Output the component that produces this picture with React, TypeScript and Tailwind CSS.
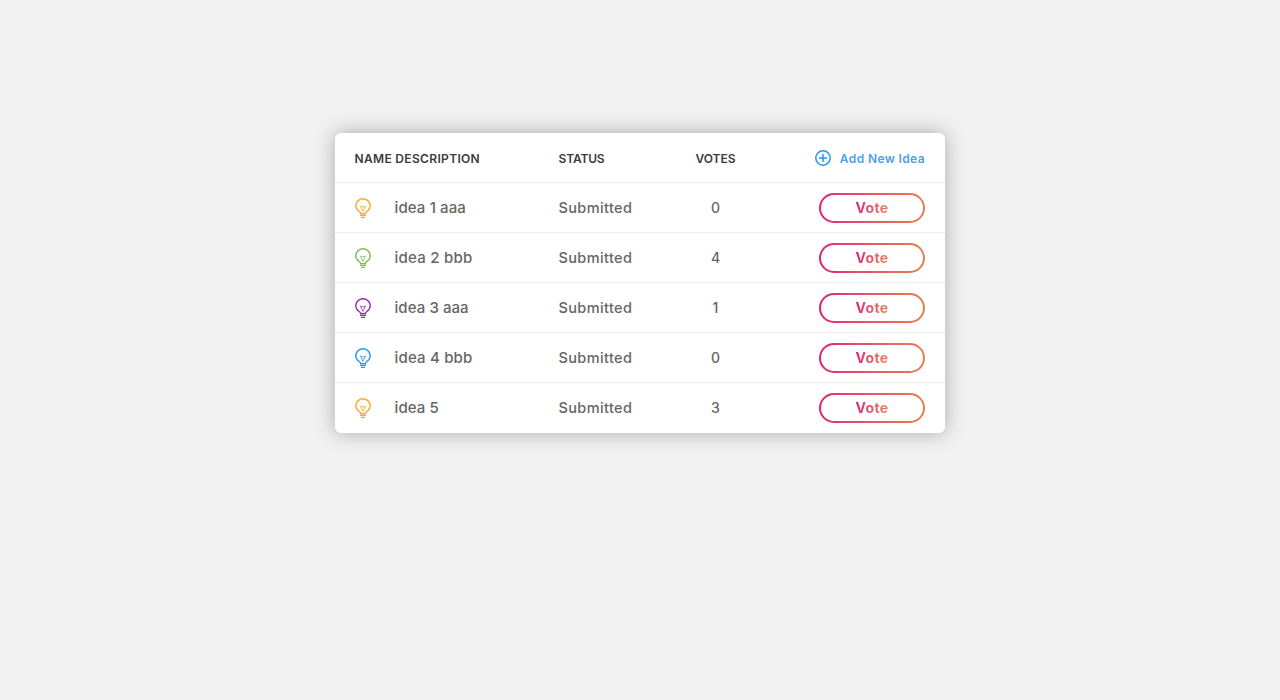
const ideas = [
  { name: 'idea 1 aaa', votes: 0, color: 'text-[#f9a825]', spacing: 'tracking-[0.12px]' },
  { name: 'idea 2 bbb', votes: 4, color: 'text-[#7cb95c]', spacing: 'tracking-[0.25px]' },
  { name: 'idea 3 aaa', votes: 1, color: 'text-[#9c27b0]', spacing: 'tracking-[0.07px]' },
  { name: 'idea 4 bbb', votes: 0, color: 'text-[#2196f3]', spacing: 'tracking-[0.18px]' },
  { name: 'idea 5', votes: 3, color: 'text-[#f9a825]', spacing: 'tracking-[0.1px]' },
];

function Bulb({ className }: { className: string }) {
  return (
    <svg className={`block h-5 w-4 shrink-0 ${className}`} viewBox="0 0 16 20" fill="none" stroke="currentColor">
      <path d="M5.6 15.7V15.2c0-.7-.5-1-1.3-1.5a7.2 7 0 1 1 7.4 0c-.8.5-1.3.8-1.3 1.5v.5Z" strokeWidth="1.4" />
      <path d="M5.4 7.9 7.9 13.4l2.6-5.5L9.1 9.2 7.9 8.3 6.8 9.2Z" strokeWidth="0.8" />
      <path d="M5 17.5h6M6 19.4h4" strokeWidth="1.2" />
    </svg>
  );
}

function VoteButton() {
  return (
    <button className="h-[30px] w-[106px] rounded-full bg-linear-to-r from-[#e01a76] to-[#e57f4d] p-[2px]">
      <span className="flex h-full items-center justify-center rounded-full bg-white">
        <span className="bg-linear-to-r from-[#e01a76] to-[#e58055] bg-clip-text text-[14px] leading-5 font-bold tracking-[0.35px] text-transparent">
          Vote
        </span>
      </span>
    </button>
  );
}

export default function App() {
  return (
    <div className="flex h-[700px] items-start justify-center bg-[#f1f1f1] pt-[133px] font-['Inter','Liberation_Sans',sans-serif]">
      <div className="h-[300px] w-[610px] rounded-[6px] bg-white shadow-[0_0_20px_rgba(0,0,0,0.3)]">
        <div className="grid h-[50px] grid-cols-[204px_132px_50px_1fr] items-center border-b border-[#eeeeee] pr-5 pl-[19.5px] text-[12px] font-semibold text-[#3b3b3b]">
          <span className="pt-0.5 tracking-[0.33px]">NAME DESCRIPTION</span>
          <span className="pt-0.5 tracking-[-0.15px]">STATUS</span>
          <span className="pt-0.5 text-center">VOTES</span>
          <button className="flex items-center justify-end gap-[9px] whitespace-nowrap text-[#4ba0ef]">
            <svg className="size-4 text-[#2196f3]" viewBox="0 0 16 16" fill="none" stroke="currentColor" strokeWidth="1.5">
              <circle cx="8" cy="8" r="7.2" />
              <path d="M8 4v8M4 8h8" />
            </svg>
            <span className="pt-0.5 tracking-[0.38px]">Add New Idea</span>
          </button>
        </div>
        {ideas.map((idea) => (
          <div
            key={idea.name}
            className="grid h-[50px] grid-cols-[204px_132px_50px_1fr] items-center border-b border-[#eeeeee] pr-5 pl-[19.5px] text-[14px] font-medium text-[#666666] last:border-transparent"
          >
            <div className="flex items-center gap-6">
              <Bulb className={idea.color} />
              <span className={`pt-px text-[15px] leading-5 ${idea.spacing}`}>{idea.name}</span>
            </div>
            <span className="text-[14.5px] leading-5 tracking-[0.38px]">Submitted</span>
            <span className="text-center">{idea.votes}</span>
            <div className="flex justify-end">
              <VoteButton />
            </div>
          </div>
        ))}
      </div>
    </div>
  );
}
